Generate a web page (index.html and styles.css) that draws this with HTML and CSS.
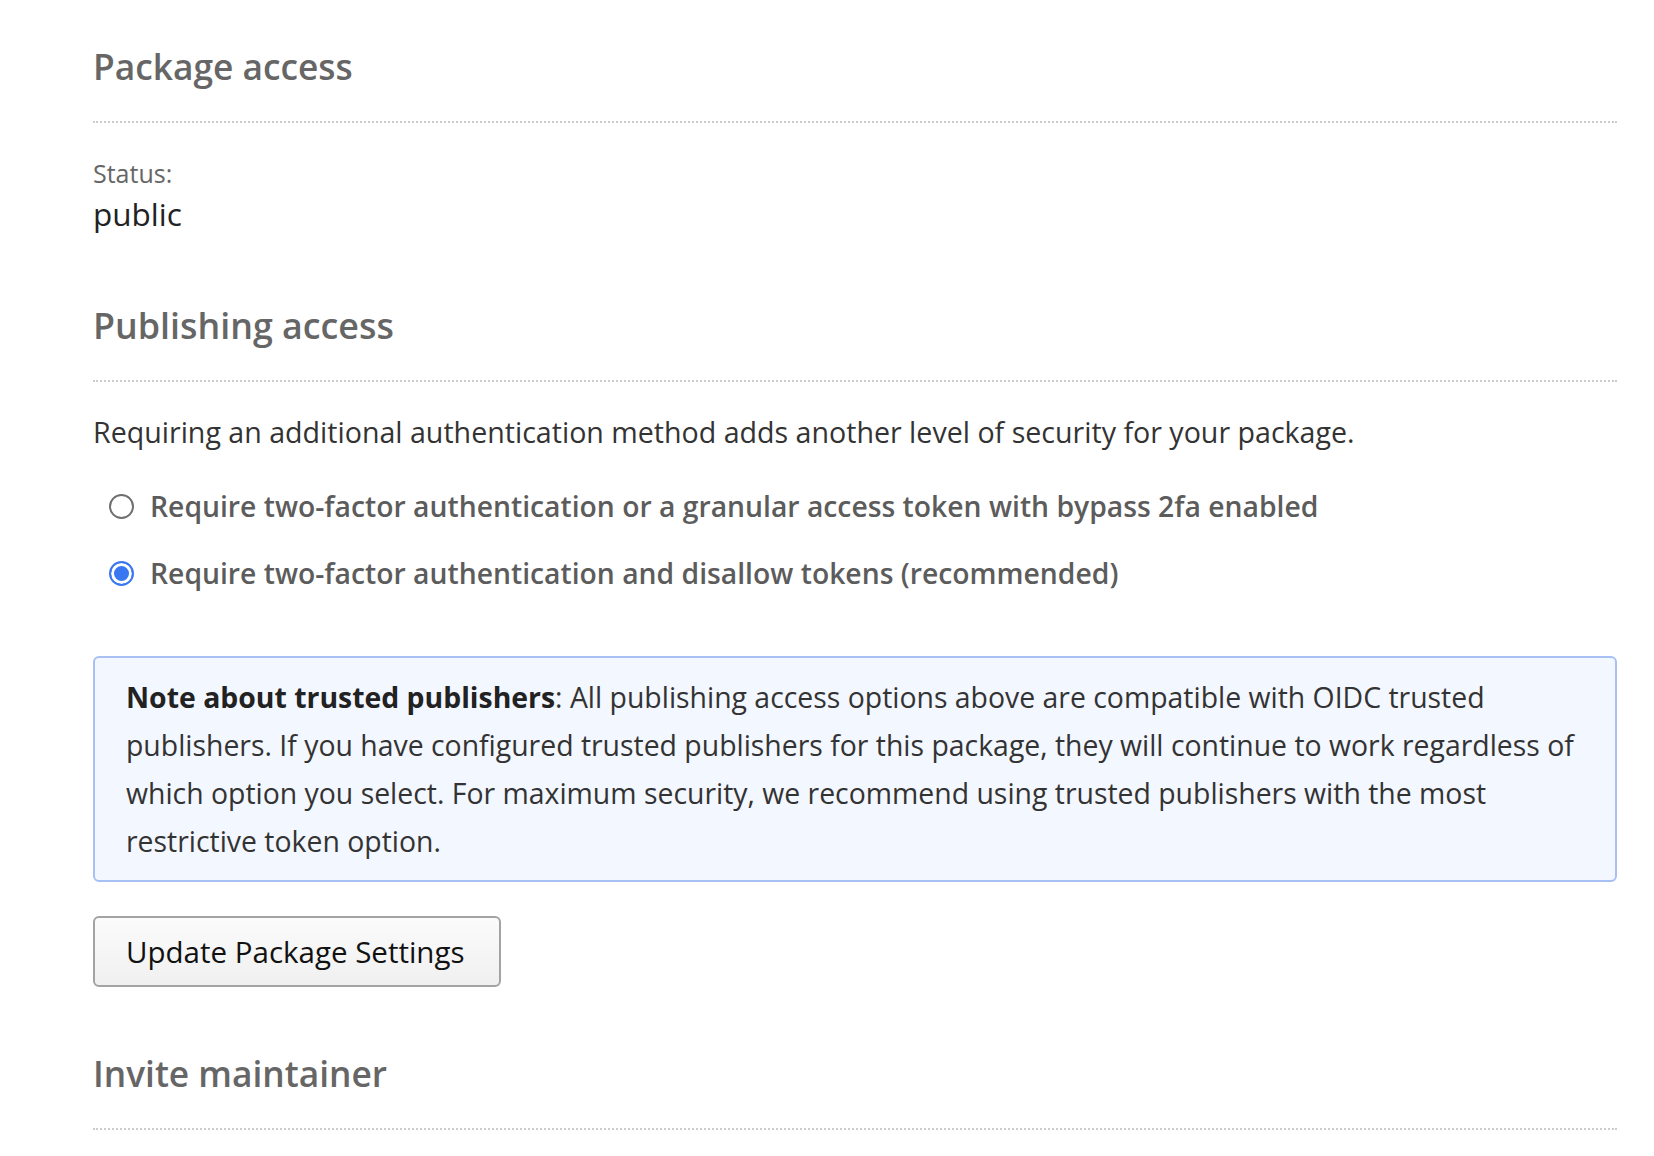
FILE: index.html
```html
<!DOCTYPE html>
<html lang="en">
<head>
<meta charset="utf-8">
<title>Package settings</title>
<link rel="stylesheet" href="styles.css">
</head>
<body>
<main class="page">
  <h2 class="section-title">Package access</h2>
  <div class="status">
    <div class="status-label">Status:</div>
    <div class="status-value">public</div>
  </div>

  <h2 class="section-title section-title--wide spaced">Publishing access</h2>
  <p class="intro">Requiring an additional authentication method adds another level of security for your package.</p>

  <div class="options">
    <label class="option">
      <span class="radio"></span>
      <span class="option-text">Require two-factor authentication or a granular access token with bypass 2fa enabled</span>
    </label>
    <label class="option">
      <span class="radio radio--checked"></span>
      <span class="option-text">Require two-factor authentication and disallow tokens (recommended)</span>
    </label>
  </div>

  <div class="note">
    <strong>Note about trusted publishers</strong>: All publishing access options above are compatible with OIDC trusted publishers. If you have configured trusted publishers for this package, they will continue to work regardless of which option you select. For maximum security, we recommend using trusted publishers with the most restrictive token option.
  </div>

  <button class="btn" type="button">Update Package Settings</button>

  <h2 class="section-title spaced-last">Invite maintainer</h2>
</main>
</body>
</html>
```
FILE: styles.css
```css
html, body {
  margin: 0;
  padding: 0;
  background: #ffffff;
}

.page {
  width: 1524px;
  padding: 44px 0 0 93px;
  font-family: "Open Sans", "Noto Sans", sans-serif;
  color: #333333;
}

.section-title {
  margin: 0;
  font-family: "Open Sans", "Noto Sans", sans-serif;
  font-weight: 600;
  font-size: 35.3px;
  line-height: 44px;
  color: #666666;
  padding-bottom: 33px;
  border-bottom: 2px dotted #cccccc;
}

.section-title--wide {
  font-size: 35.8px;
}

.spaced {
  margin-top: 69px;
}

.spaced-last {
  margin-top: 64px;
}

.status {
  margin-top: 35px;
}

.status-label {
  font-size: 25px;
  line-height: 30px;
  color: #666666;
}

.status-value {
  margin-top: 6px;
  font-size: 31.5px;
  line-height: 40px;
  color: #222222;
}

.intro {
  margin: 32px 0 0;
  font-size: 28.6px;
  line-height: 36px;
  color: #333333;
}

.options {
  margin-top: 38px;
  display: flex;
  flex-direction: column;
  gap: 31px;
  padding-left: 16px;
}

.option {
  display: flex;
  align-items: center;
  gap: 16px;
  height: 36px;
}

.radio {
  box-sizing: border-box;
  width: 25px;
  height: 25px;
  border-radius: 50%;
  border: 2px solid #6f6f6f;
  background: #ffffff;
  flex: none;
}

.radio--checked {
  border: 2px solid #3a78f2;
  background: #3a78f2;
  box-shadow: inset 0 0 0 3px #ffffff;
}

.option-text {
  font-size: 28.3px;
  line-height: 36px;
  font-weight: 600;
  color: #5c5c5c;
}

.note {
  margin-top: 65px;
  padding: 15px 14px 15px 31px;
  border: 2px solid #a9c0f5;
  border-radius: 6px;
  background: #f3f7ff;
  font-size: 28.4px;
  line-height: 48px;
  color: #333333;
}

.note strong {
  font-weight: 700;
  color: #222222;
}

.btn {
  display: block;
  margin-top: 34px;
  box-sizing: border-box;
  width: 408px;
  height: 71px;
  padding: 0 31px;
  text-align: left;
  font-family: "Open Sans", sans-serif;
  font-size: 29.5px;
  color: #111111;
  background: linear-gradient(#fbfbfb, #f0f0f0);
  border: 2px solid #a3a3a3;
  border-radius: 6px;
}
```
